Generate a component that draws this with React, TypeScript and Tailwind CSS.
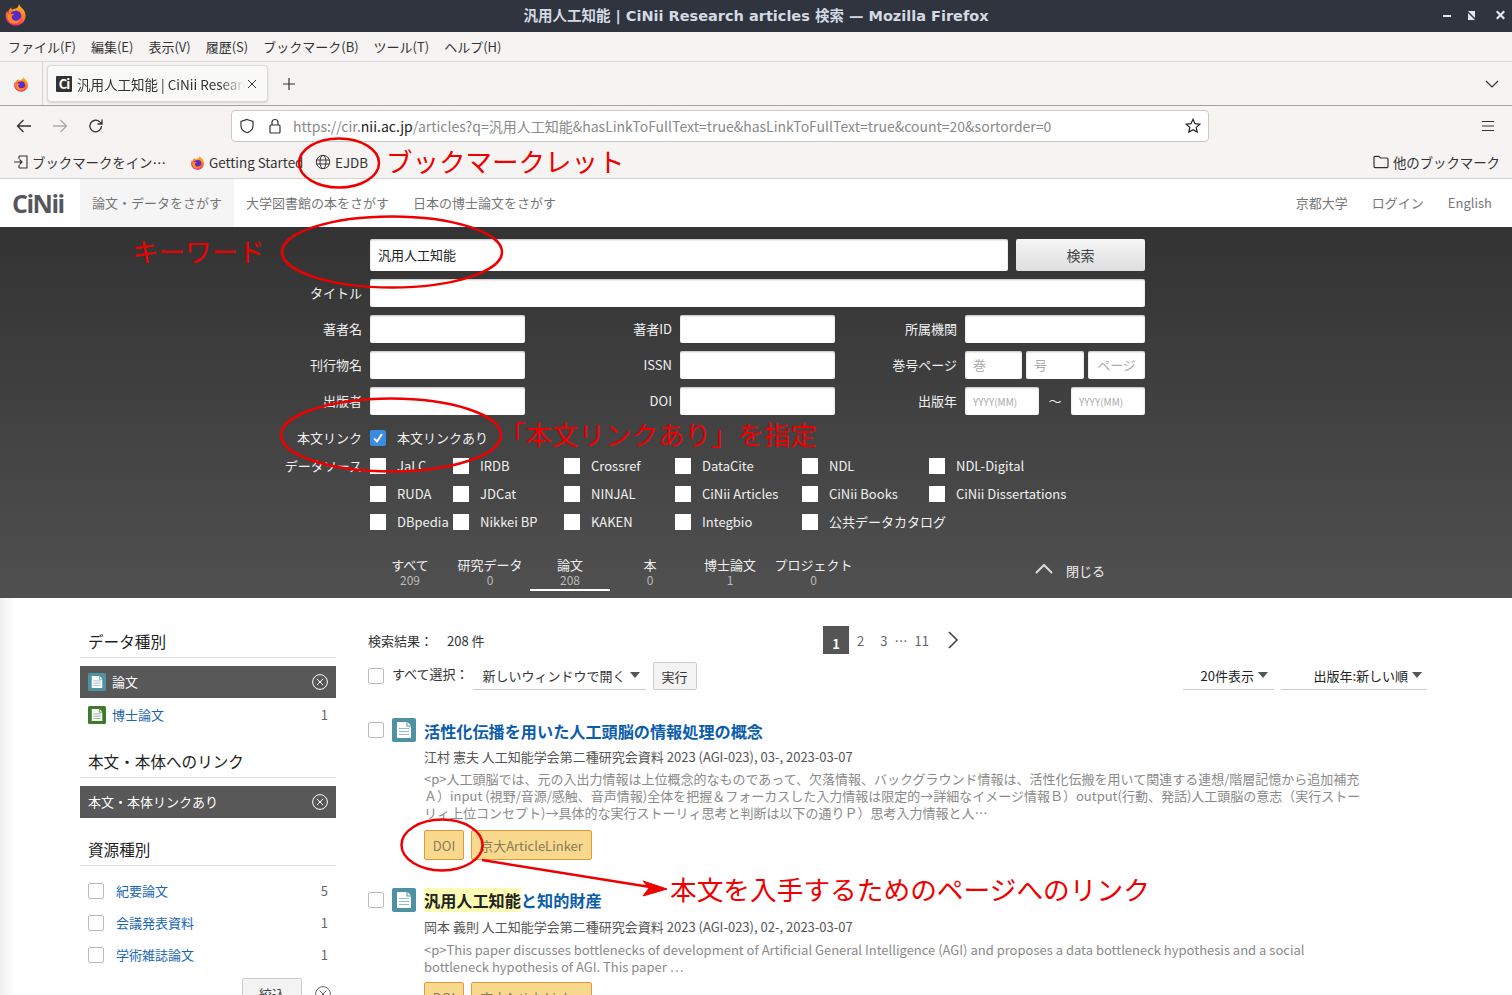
import React from "react";

const FF = ({ size, id }: { size: number; id: string }) => (
  <svg width={size} height={size} viewBox="0 0 24 24" className="shrink-0">
    <defs>
      <linearGradient id={id} x1="0.7" y1="0" x2="0.3" y2="1">
        <stop offset="0" stopColor="#ffc21a" />
        <stop offset="0.45" stopColor="#ff7a1f" />
        <stop offset="0.8" stopColor="#ff3a5e" />
        <stop offset="1" stopColor="#d92aa0" />
      </linearGradient>
    </defs>
    <path d="M15.500 .5c.5 2.800 2.600 4 3.900 5.600 2 2.200 3.100 4.600 3.100 7.500 0 5.800-4.600 10-10.300 10S1.700 19.300 1.700 13.600c0-2.200.5-4 1.500-5.600.1 1 .6 1.800 1.200 2.300 0-2.300 1.200-4.600 3.300-5.500-.1 1 .2 1.700.8 2.200C9.800 6 12 6 13.300 5.200c1.600-1 2.300-2.800 2.200-4.700z" fill={`url(#${id})`} />
    <circle cx="12.300" cy="13.600" r="5.800" fill="#5a2bc8" />
    <path d="M3.800 11c1 .8 2.300 1 3.600.6 1.600-.5 3-.2 3.800.8-1.800-.2-3.200.6-3.200 2.200 0 2.500 2.600 4.200 5.300 3.800 2-.3 3.600-1.500 4.400-3.200 0 4-3.300 6.400-6.800 6.400-4.200 0-7.300-3.500-7.300-7.300 0-1 .1-2 .2-3.300z" fill="#ff8a1e" />
    <path d="M9 6.800c1.600-.6 3.600-.4 5 .4-1.800-.2-2.800.3-3.300 1.300-.8-.6-1.400-1-1.700-1.700z" fill="#ffb21c" />
  </svg>
);

const DocIcon = ({ color, size = 24 }: { color: string; size?: number }) => (
  <svg width={size} height={size} viewBox="0 0 24 24" className="shrink-0">
    <rect width="24" height="24" rx="2" fill={color} />
    <path d="M5 4h9.500v4.500H19V20H5z" fill="#fff" />
    <path d="M15.500 4 19 7.500h-3.500z" fill="#fff" />
    <path d="M7 10.500h10M7 13.500h10M7 16.500h10" stroke={color} strokeWidth="1.200" opacity="0.6" />
  </svg>
);

const CircleX = ({ c = "#fff", s = 16 }: { c?: string; s?: number }) => (
  <svg width={s} height={s} viewBox="0 0 16 16" fill="none" stroke={c} strokeWidth="1">
    <circle cx="8" cy="8" r="7.400" />
    <path d="M4.800 4.800l6.400 6.400M11.200 4.800l-6.400 6.400" />
  </svg>
);

const Tri = () => <span className="block w-0 h-0 border-x-[5px] border-x-transparent border-t-[6px] border-t-[#555]" />;

const Field = ({ w, ph, cls = "" }: { w: string; ph?: string; cls?: string }) => (
  <div className={`${w} ${cls} h-[28px] bg-white rounded-[2px] shadow-[inset_0_1px_2px_rgba(0,0,0,0.25)] flex items-center px-2 text-[#aaa] text-[13px]`}>{ph}</div>
);

const Label = ({ w, children }: { w: string; children: React.ReactNode }) => (
  <div className={`${w} pr-2 pb-[1px] text-right text-[13px] text-[#f0f0f0] shrink-0 leading-none whitespace-nowrap`}>{children}</div>
);

const sources = [
  ["JaLC", "IRDB", "Crossref", "DataCite", "NDL", "NDL-Digital"],
  ["RUDA", "JDCat", "NINJAL", "CiNii Articles", "CiNii Books", "CiNii Dissertations"],
  ["DBpedia", "Nikkei BP", "KAKEN", "Integbio", "公共データカタログ", ""],
];
const srcW = ["w-[83px]", "w-[111px]", "w-[111px]", "w-[127px]", "w-[127px]", "w-[200px]"];

const tabsData: [string, string, string][] = [
  ["すべて", "209", "w-[80px]"],
  ["研究データ", "0", "w-[80px]"],
  ["論文", "208", "w-[80px]"],
  ["本", "0", "w-[80px]"],
  ["博士論文", "1", "w-[80px]"],
  ["プロジェクト", "0", "w-[87px]"],
];

const Check = () => (
  <span className="block w-4 h-4 shrink-0 bg-white border border-[#bbb] rounded-[2px]" />
);

const Heading = ({ children, cls = "" }: { children: React.ReactNode; cls?: string }) => (
  <div className={`h-[32px] pl-2 flex items-center border-b border-[#ddd] text-[15.600px] text-[#222] ${cls}`}>{children}</div>
);

const Facet = ({ t, n }: { t: string; n: string }) => (
  <div className="h-8 flex items-center pl-2 pr-2 text-[13px]">
    <Check />
    <span className="ml-3 text-[#1a66b5]">{t}</span>
    <span className="ml-auto text-[#666]">{n}</span>
  </div>
);

const Orange = ({ w, children }: { w: string; children: React.ReactNode }) => (
  <div className={`${w} h-[30px] pt-[1px] bg-[#f9d98e] border border-[#dd9b3a] rounded-[2px] flex items-center justify-center text-[13px] text-[#8a7a55] whitespace-nowrap`}>{children}</div>
);

const Result = ({ title, author, lines, cls = "", tcls, acls, lcls, bcls }: { title: React.ReactNode; author: string; lines: string[]; cls?: string; tcls: string; acls: string; lcls: string; bcls: string }) => (
  <div className={`flex ${cls}`}>
    <div className="w-[24px] pt-[4px] shrink-0"><Check /></div>
    <DocIcon color="#4d92a3" />
    <div className="ml-2 flex-1">
      <div className={`${tcls} flex items-center text-[16.150px] font-bold text-[#0a5cad] whitespace-nowrap leading-none`}>{title}</div>
      <div className={`${acls} h-[20px] flex items-center text-[13px] text-[#555] whitespace-nowrap`}>{author}</div>
      <div className={`${lcls} text-[13px] text-[#8a8a8a] leading-[17px] whitespace-nowrap`}>
        {lines.map((l) => <div key={l}>{l}</div>)}
      </div>
      <div className={`${bcls} flex gap-[7px]`}>
        <Orange w="w-[40px]">DOI</Orange>
        <Orange w="w-[121px]">京大ArticleLinker</Orange>
      </div>
    </div>
  </div>
);

export default function App() {
  return (
    <div className="relative w-[1512px] h-[995px] overflow-hidden bg-white font-['Noto_Sans_CJK_JP','Noto_Sans',sans-serif] text-[#333]">
      {/* title bar */}
      <div className="relative h-8 pt-[1px] bg-[#2f343f] flex items-center justify-center text-[14.500px] font-bold text-[#d3dae3] font-['DejaVu_Sans','Noto_Sans_CJK_JP',sans-serif]">
        <span>汎用人工知能 | CiNii Research articles 検索 — Mozilla Firefox</span>
        <div className="absolute left-[4px] top-[3px]"><FF size={23} id="ff1" /></div>
        <div className="absolute right-0 top-0 h-8 flex items-center text-white">
          <svg width="70" height="16" viewBox="0 0 70 16" fill="#e4e8ee">
            <rect x="1" y="7" width="8" height="2" />
            <path d="M26 3h7v7zM33 12h-7V5z" />
            <path d="M54 4l1.500-1.500 3 3 3-3 1.500 1.500-3 3 3 3-1.500 1.500-3-3-3 3-1.500-1.500 3-3z" />
          </svg>
        </div>
      </div>
      {/* menu */}
      <div className="h-[30px] bg-[#f5f4f2] border-b border-[#dedbd6] flex items-center pl-2 gap-[15px] text-[13px] text-[#333]">
        {["ファイル(F)", "編集(E)", "表示(V)", "履歴(S)", "ブックマーク(B)", "ツール(T)", "ヘルプ(H)"].map((m) => <span key={m}>{m}</span>)}
      </div>
      {/* tabs */}
      <div className="h-[44px] bg-[#f5f4f2] border-b border-[#a3a19d] flex items-center">
        <div className="w-[43px] h-full border-r border-[#d8d5d0] flex items-center justify-center"><FF size={16} id="ff2" /></div>
        <div className="ml-1 w-[221px] h-[37px] bg-[#f9f9f8] rounded-[4px] border border-[#dcdad6] shadow-[0_1px_2px_rgba(0,0,0,0.15)] flex items-center pl-2 text-[13.500px] text-[#333]">
          <span className="w-4 h-4 bg-[#333] rounded-[1px] text-white text-[13px] font-bold tracking-[-1px] flex items-center justify-center leading-none shrink-0">Ci</span>
          <span className="ml-[5px] w-[168px] overflow-hidden whitespace-nowrap leading-[20px] [mask-image:linear-gradient(to_right,#000_85%,transparent)]">汎用人工知能 | CiNii Research articles 検索</span>
          <svg width="10" height="10" viewBox="0 0 10 10" stroke="#333" className="ml-[2px]"><path d="M1 1l8 8M9 1l-8 8" /></svg>
        </div>
        <svg width="14" height="14" viewBox="0 0 14 14" stroke="#333" strokeWidth="1.200" className="ml-[14px]"><path d="M7 1v12M1 7h12" /></svg>
        <svg width="14" height="8" viewBox="0 0 14 8" fill="none" stroke="#333" strokeWidth="1.200" className="ml-auto mr-[13px]"><path d="M1 1l6 6 6-6" /></svg>
      </div>
      {/* nav */}
      <div className="h-[40px] bg-[#f5f4f2] flex items-center pl-[16px]">
        <svg width="16" height="16" viewBox="0 0 16 16" fill="none" stroke="#333" strokeWidth="1.300"><path d="M15 8H1.500M7.500 2l-6 6 6 6" /></svg>
        <svg width="16" height="16" viewBox="0 0 16 16" fill="none" stroke="#aaa" strokeWidth="1.300" className="ml-[20px]"><path d="M1 8h13.500M8.500 2l6 6-6 6" /></svg>
        <svg width="16" height="16" viewBox="0 0 16 16" fill="none" stroke="#333" strokeWidth="1.300" className="ml-[20px]"><path d="M13.500 8a5.800 5.800 0 1 1-1.700-4.100l1.900 1.900M14 1.500v4.500H9.500" /></svg>
        <div className="ml-[127px] w-[978px] h-[32px] bg-white border border-[#cbc8c2] rounded-[4px] flex items-center pl-[7px] pr-[7px]">
          <svg width="16" height="16" viewBox="0 0 16 16" fill="none" stroke="#333" strokeWidth="1.200"><path d="M8 1.500l6 2v4.500c0 3.500-3 5.800-6 6.700-3-.9-6-3.200-6-6.700V3.500z" /></svg>
          <svg width="14" height="16" viewBox="0 0 14 16" fill="none" stroke="#333" strokeWidth="1.200" className="ml-[13px]"><rect x="2" y="7" width="10" height="8" rx="1" /><path d="M4 7V4.500a3 3 0 0 1 6 0V7" /></svg>
          <span className="ml-[11px] text-[14px] text-[#8a8a8a] whitespace-nowrap">https://cir.<span className="text-[#222]">nii.ac.jp</span>/articles?q=汎用人工知能&hasLinkToFullText=true&hasLinkToFullText=true&count=20&sortorder=0</span>
          <svg width="16" height="16" viewBox="0 0 16 16" fill="none" stroke="#222" strokeWidth="1.200" className="ml-auto"><path d="M8 1.300l2 4.400 4.800.5-3.600 3.200 1 4.700L8 11.700l-4.200 2.400 1-4.700L1.200 6.200 6 5.700z" /></svg>
        </div>
        <svg width="14" height="12" viewBox="0 0 14 12" stroke="#333" strokeWidth="1.200" className="ml-auto mr-[17px]"><path d="M1 1.500h12M1 6h12M1 10.500h12" /></svg>
      </div>
      {/* bookmarks */}
      <div className="h-[33px] bg-[#f5f4f2] border-b border-[#d6d2cc] flex items-center pl-[13px] text-[13.400px] text-[#333]">
        <svg width="15" height="14" viewBox="0 0 15 14" fill="none" stroke="#333" strokeWidth="1.100"><path d="M6 1h8v12H6M6 4V1M6 13v-3M1 7h8M6.500 4.500 9 7l-2.500 2.500" /></svg>
        <span className="ml-[4px] w-[134px] whitespace-nowrap">ブックマークをイン…</span>
        <span className="ml-[24px]"><FF size={15} id="ff3" /></span>
        <span className="ml-[4px] w-[94px] whitespace-nowrap overflow-hidden">Getting Started</span>
        <svg width="16" height="16" viewBox="0 0 16 16" fill="none" stroke="#333" strokeWidth="1" className="ml-[12px]"><circle cx="8" cy="8" r="6.700" /><ellipse cx="8" cy="8" rx="3" ry="6.700" /><path d="M1.500 6h13M1.500 10h13" /></svg>
        <span className="ml-[4px]">EJDB</span>
        <svg width="16" height="14" viewBox="0 0 16 14" fill="none" stroke="#333" strokeWidth="1.200" className="ml-auto"><path d="M1 11.500v-9A1.200 1.200 0 0 1 2.200 1.300h3.600L7.500 3h6.300A1.200 1.200 0 0 1 15 4.200v7.300a1.200 1.200 0 0 1-1.200 1.200H2.200A1.200 1.200 0 0 1 1 11.500z" /></svg>
        <span className="ml-[4px] mr-[12px]">他のブックマーク</span>
      </div>
      {/* site header */}
      <div className="h-[48px] bg-white flex items-center text-[13px] text-[#777]">
        <div className="w-[80px] pl-[12px] text-[25px] font-bold text-[#54585c] tracking-[-1.500px] leading-none font-['Open_Sans',sans-serif]">CiNii</div>
        <div className="w-[154px] h-full bg-[#f5f5f5] flex items-center justify-center">論文・データをさがす</div>
        <span className="ml-[12px]">大学図書館の本をさがす</span>
        <span className="ml-[24px]">日本の博士論文をさがす</span>
        <span className="ml-auto">京都大学</span>
        <span className="ml-[24px]">ログイン</span>
        <span className="ml-[24px] mr-[20px]">English</span>
      </div>
      {/* search panel */}
      <div className="h-[371px] bg-gradient-to-b from-[#333333] to-[#505050] pl-[280px] pt-3 text-[#f0f0f0] text-[13px]">
        <div className="flex pl-[90px] gap-2">
          <div className="w-[638px] h-8 bg-white rounded-[2px] flex items-center px-2 text-[#222] shadow-[inset_0_1px_2px_rgba(0,0,0,0.25)]">汎用人工知能</div>
          <div className="w-[129px] h-8 bg-gradient-to-b from-[#f5f5f5] to-[#dedede] rounded-[2px] flex items-center justify-center text-[14px] text-[#444]">検索</div>
        </div>
        <div className="mt-2 flex items-center">
          <Label w="w-[90px]">タイトル</Label>
          <Field w="w-[775px]" />
        </div>
        <div className="mt-2 flex items-center">
          <Label w="w-[90px]">著者名</Label>
          <Field w="w-[155px]" />
          <Label w="w-[155px]">著者ID</Label>
          <Field w="w-[155px]" />
          <Label w="w-[130px]">所属機関</Label>
          <Field w="w-[180px]" />
        </div>
        <div className="mt-2 flex items-center">
          <Label w="w-[90px]">刊行物名</Label>
          <Field w="w-[155px]" />
          <Label w="w-[155px]">ISSN</Label>
          <Field w="w-[155px]" />
          <Label w="w-[130px]">巻号ページ</Label>
          <Field w="w-[57px]" ph="巻" />
          <Field w="w-[58px]" ph="号" cls="ml-1" />
          <Field w="w-[57px]" ph="ページ" cls="ml-1 justify-center" />
        </div>
        <div className="mt-2 flex items-center">
          <Label w="w-[90px]">出版者</Label>
          <Field w="w-[155px]" />
          <Label w="w-[155px]">DOI</Label>
          <Field w="w-[155px]" />
          <Label w="w-[130px]">出版年</Label>
          <Field w="w-[74px] !text-[10px]" ph="YYYY(MM)" />
          <span className="w-[32px] text-center">〜</span>
          <Field w="w-[74px] !text-[10px]" ph="YYYY(MM)" />
        </div>
        <div className="mt-[15px] h-4 flex items-center">
          <Label w="w-[90px]">本文リンク</Label>
          <span className="w-4 h-4 rounded-[2px] bg-[#3b8be0] flex items-center justify-center">
            <svg width="12" height="12" viewBox="0 0 12 12" fill="none" stroke="#fff" strokeWidth="2"><path d="M2 6.500l3 3 5-7.500" /></svg>
          </span>
          <span className="ml-[11px] text-[13px]">本文リンクあり</span>
        </div>
        <div className="mt-[6px] flex">
          <Label w="w-[90px] pt-[7px]">データソース</Label>
          <div>
            {sources.map((row, i) => (
              <div key={i} className="h-[28px] flex items-center">
                {row.map((s, j) => s ? (
                  <div key={s} className={`${srcW[j]} flex items-center shrink-0 whitespace-nowrap`}>
                    <span className="w-4 h-4 bg-white shrink-0 mr-[11px]" />
                    <span>{s}</span>
                  </div>
                ) : null)}
              </div>
            ))}
          </div>
        </div>
        <div className="mt-[20px] ml-[90px] flex items-start">
          {tabsData.map(([a, b, w], i) => (
            <div key={a} className={`${w} h-[35px] flex flex-col items-center leading-none ${i === 2 ? "border-b-2 border-white" : ""}`}>
              <span className="text-[13px] leading-[15px] whitespace-nowrap mt-[1px]">{a}</span>
              <span className="text-[12px] leading-[14px] text-[#bbb] mt-[1px]">{b}</span>
            </div>
          ))}
          <svg width="18" height="10" viewBox="0 0 18 10" fill="none" stroke="#ddd" strokeWidth="2" className="ml-[178px] mt-[8px]"><path d="M1 9l8-8 8 8" /></svg>
          <span className="ml-[13px] mt-[5px] text-[13px]">閉じる</span>
        </div>
      </div>
      {/* body */}
      <div className="flex h-[397px] bg-gradient-to-r from-[#f0f0f0] via-white via-[1%] to-white">
        {/* sidebar */}
        <aside className="ml-[80px] w-[256px] shrink-0 pt-[28px]">
          <Heading>データ種別</Heading>
          <div className="mt-2 h-8 bg-[#585858] flex items-center pl-2 pr-2 text-[13px] text-white">
            <DocIcon color="#4f93a3" size={18} />
            <span className="ml-[6px]">論文</span>
            <span className="ml-auto"><CircleX /></span>
          </div>
          <div className="mt-[1px] h-8 flex items-center pl-2 pr-2 text-[13px]">
            <DocIcon color="#3e7a2c" size={18} />
            <span className="ml-[6px] text-[#1a66b5]">博士論文</span>
            <span className="ml-auto text-[#666]">1</span>
          </div>
          <Heading cls="mt-[15px]">本文・本体へのリンク</Heading>
          <div className="mt-2 h-8 bg-[#585858] flex items-center pl-2 pr-2 text-[13px] text-white">
            <span>本文・本体リンクあり</span>
            <span className="ml-auto"><CircleX /></span>
          </div>
          <Heading cls="mt-[16px]">資源種別</Heading>
          <div className="pt-[9px]">
            <Facet t="紀要論文" n="5" />
            <Facet t="会議発表資料" n="1" />
            <Facet t="学術雑誌論文" n="1" />
          </div>
          <div className="mt-[7px] flex items-center justify-end pr-[5px]">
            <div className="w-[60px] h-8 bg-[#f3f3f3] border border-[#ccc] rounded-[2px] text-[13px] text-[#444] flex items-center justify-center">絞込</div>
            <span className="ml-[13px]"><CircleX c="#666" /></span>
          </div>
        </aside>
        {/* main */}
        <main className="ml-[32px] w-[1059px] shrink-0 pt-[28px]">
          <div className="h-7 flex items-center text-[13px] text-[#333]">
            <span className="w-[79px] pt-[1px]">検索結果：</span>
            <span className="w-[376px] pt-[1px]">208 件</span>
            <div className="flex items-center text-[13px] text-[#666]">
              <span className="w-[26px] h-7 bg-[#555] text-white font-bold flex items-end justify-center pb-[1px]">1</span>
              <span className="ml-2 pt-[1px]">2</span>
              <span className="ml-4 pt-[1px]">3</span>
              <span className="ml-[7px] pt-[1px]">⋯</span>
              <span className="ml-[7px] pt-[1px]">11</span>
              <svg width="12" height="18" viewBox="0 0 12 18" fill="none" stroke="#444" strokeWidth="1.600" className="ml-[18px]"><path d="M2 1l8 8-8 8" /></svg>
            </div>
          </div>
          <div className="mt-2 h-7 flex items-center text-[13px] text-[#333]">
            <Check />
            <span className="ml-[8px] -mt-[4px]">すべて選択：</span>
            <div className="ml-[4px] w-[173px] h-7 border-b border-[#ccc] flex items-center pl-[10px]">
              <span className="whitespace-nowrap">新しいウィンドウで開く</span>
              <span className="ml-[4px] -mt-[1px]"><Tri /></span>
            </div>
            <div className="ml-[7px] w-[44px] h-7 bg-[#f3f3f3] border border-[#ccc] rounded-[2px] flex items-center justify-center pt-[1px]">実行</div>
            <div className="ml-auto w-[91px] h-7 border-b border-[#ccc] flex items-center justify-end pr-[6px] gap-[4px] text-[#222]">20件表示<span className="-mt-[1px]"><Tri /></span></div>
            <div className="ml-[7px] w-[146px] h-7 border-b border-[#ccc] flex items-center justify-end pr-[5px] gap-[4px] text-[#222]">出版年:新しい順<span className="-mt-[1px]"><Tri /></span></div>
          </div>
          <Result
            cls="mt-[28px]"
            tcls="h-[26px]"
            acls="mt-[3px]"
            lcls="mt-[3px]"
            bcls="mt-[9px]"
            title="活性化伝播を用いた人工頭脳の情報処理の概念"
            author="江村 憲夫 人工知能学会第二種研究会資料 2023 (AGI-023), 03-, 2023-03-07"
            lines={[
              "<p>人工頭脳では、元の入出力情報は上位概念的なものであって、欠落情報、バックグラウンド情報は、活性化伝搬を用いて関連する連想/階層記憶から追加補充",
              "Ａ）input (視野/音源/感触、音声情報)全体を把握＆フォーカスした入力情報は限定的→詳細なイメージ情報Ｂ）output(行動、発話)人工頭脳の意志（実行ストー",
              "リィ上位コンセプト)→具体的な実行ストーリィ思考と判断は以下の通りＰ）思考入力情報と人…",
            ]}
          />
          <Result
            cls="mt-[28px]"
            tcls="h-[24px]"
            acls="mt-[5px]"
            lcls="mt-[4px]"
            bcls="mt-[7px]"
            title={<><mark className="bg-[#fbfdb4] text-[#222] h-[24px] flex items-center">汎用人工知能</mark>と知的財産</>}
            author="岡本 義則 人工知能学会第二種研究会資料 2023 (AGI-023), 02-, 2023-03-07"
            lines={[
              "<p>This paper discusses bottlenecks of development of Artificial General Intelligence (AGI) and proposes a data bottleneck hypothesis and a social",
              "bottleneck hypothesis of AGI. This paper …",
            ]}
          />
        </main>
      </div>
      {/* annotations drawn by hand over the screenshot */}
      <svg className="absolute left-0 top-0 pointer-events-none" width="1512" height="995" fill="none" stroke="#ee0000" strokeWidth="2.500">
        <ellipse cx="339" cy="163" rx="40" ry="24.500" />
        <ellipse cx="392" cy="252" rx="110" ry="35.500" />
        <ellipse cx="391" cy="435" rx="110" ry="36.500" />
        <ellipse cx="442" cy="845" rx="40.500" ry="25.500" />
        <path d="M482 860 650 887" strokeWidth="2.500" />
        <path d="M667 889 643 881 649 888 643 896z" fill="#ee0000" strokeWidth="1" />
      </svg>
      <span className="absolute left-[386px] top-[141px] text-[26.500px] leading-[40px] text-[#ee0000] whitespace-nowrap">ブックマークレット</span>
      <span className="absolute left-[132px] top-[231px] text-[26.500px] leading-[40px] text-[#ee0000] whitespace-nowrap">キーワード</span>
      <span className="absolute left-[499px] top-[414px] text-[26.500px] leading-[40px] text-[#ee0000] whitespace-nowrap">「本文リンクあり」を指定</span>
      <span className="absolute left-[670px] top-[869px] text-[26.700px] leading-[40px] text-[#ee0000] whitespace-nowrap">本文を入手するためのページへのリンク</span>
    </div>
  );
}
